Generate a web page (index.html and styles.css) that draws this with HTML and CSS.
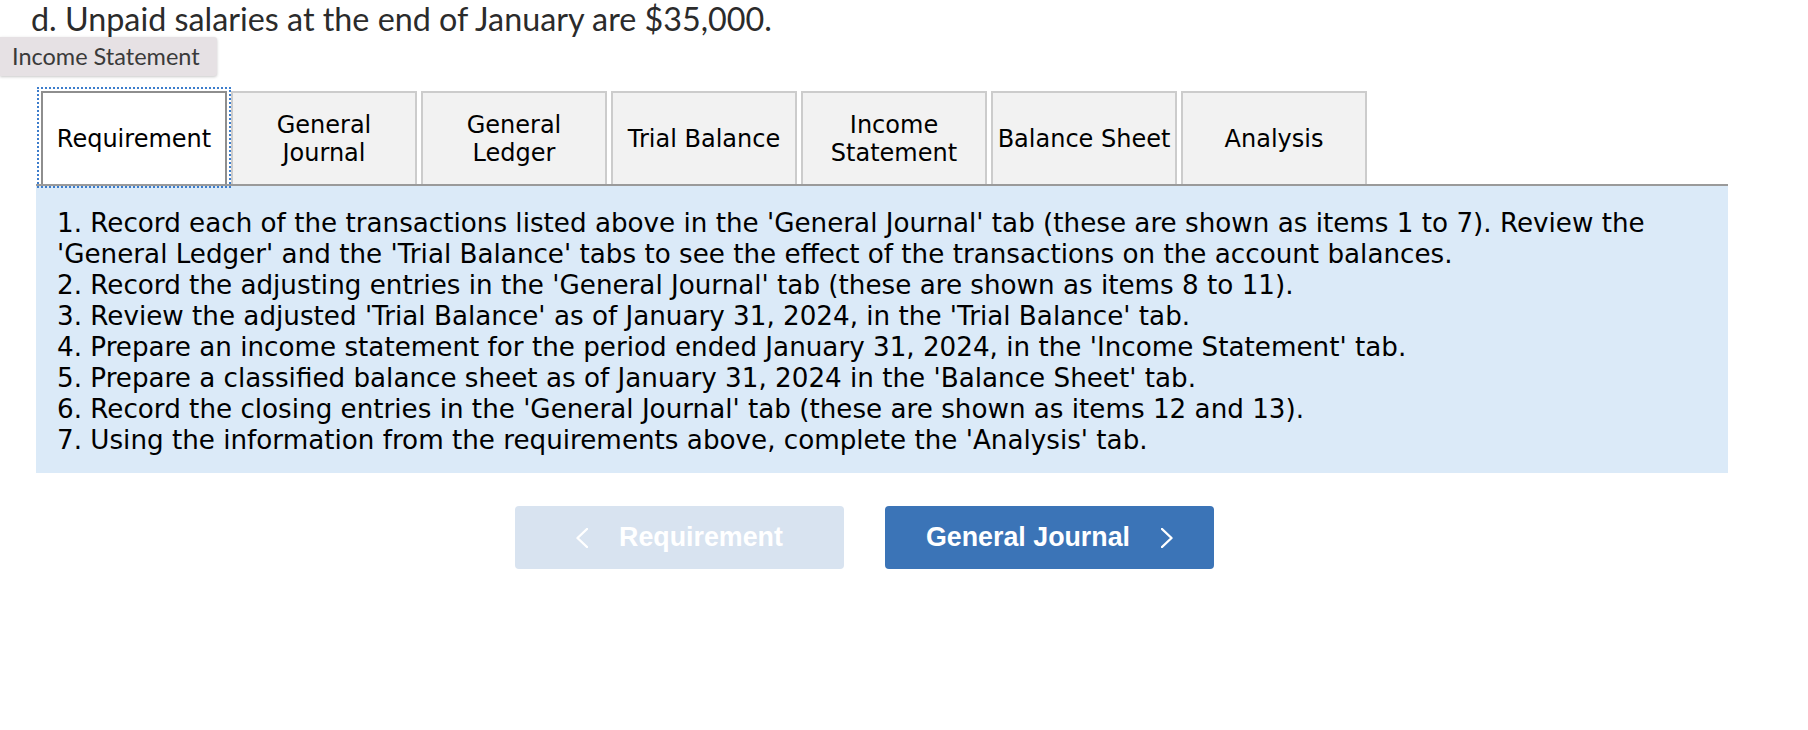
FILE: index.html
```html
<!DOCTYPE html>
<html lang="en">
<head>
<meta charset="utf-8">
<title>Requirement</title>
<link rel="stylesheet" href="styles.css">
</head>
<body>
<div class="page">
  <p class="question">d. Unpaid salaries at the end of January are $35,000.</p>
  <div class="tooltip">Income Statement</div>
  <div class="widget">
    <div class="tabs">
      <button class="tab active">Requirement</button>
      <button class="tab">General<br>Journal</button>
      <button class="tab">General<br>Ledger</button>
      <button class="tab">Trial Balance</button>
      <button class="tab">Income<br>Statement</button>
      <button class="tab">Balance Sheet</button>
      <button class="tab">Analysis</button>
    </div>
    <div class="panel">
      <p class="item">1. Record each of the transactions listed above in the 'General Journal' tab (these are shown as items 1 to 7). Review the 'General Ledger' and the 'Trial Balance' tabs to see the effect of the transactions on the account balances.</p>
      <p class="item">2. Record the adjusting entries in the 'General Journal' tab (these are shown as items 8 to 11).</p>
      <p class="item">3. Review the adjusted 'Trial Balance' as of January 31, 2024, in the 'Trial Balance' tab.</p>
      <p class="item">4. Prepare an income statement for the period ended January 31, 2024, in the 'Income Statement' tab.</p>
      <p class="item">5. Prepare a classified balance sheet as of January 31, 2024 in the 'Balance Sheet' tab.</p>
      <p class="item">6. Record the closing entries in the 'General Journal' tab (these are shown as items 12 and 13).</p>
      <p class="item">7. Using the information from the requirements above, complete the 'Analysis' tab.</p>
    </div>
    <div class="nav">
      <button class="navbtn disabled">
        <svg class="chev" width="12" height="20" viewBox="0 0 12 20"><polyline points="11,1 1.5,10 11,19"/></svg>
        <span>Requirement</span>
      </button>
      <button class="navbtn primary">
        <span>General Journal</span>
        <svg class="chev" width="12" height="20" viewBox="0 0 12 20"><polyline points="1,1 10.5,10 1,19"/></svg>
      </button>
    </div>
  </div>
</div>
</body>
</html>
```
FILE: styles.css
```css
html, body {
  margin: 0;
  padding: 0;
  background: #ffffff;
}

.page {
  position: relative;
  width: 1808px;
  min-height: 730px;
}

.question {
  margin: 0;
  padding-left: 31px;
  font-family: Lato, "Open Sans", sans-serif;
  font-size: 32.3px;
  line-height: 38px;
  color: #2b2b2b;
}

.tooltip {
  position: absolute;
  left: 0;
  top: 37px;
  width: 205px;
  height: 39px;
  padding-left: 12px;
  background: #e6e1e4;
  color: #3a3a3a;
  font-family: Lato, "Open Sans", sans-serif;
  font-size: 23.5px;
  line-height: 39px;
  border-radius: 0 3px 3px 0;
  box-shadow: 0 1px 3px rgba(0, 0, 0, 0.22);
  z-index: 5;
}

.widget {
  margin: 53px 0 0 36px;
  width: 1692px;
}

.tabs {
  display: flex;
  gap: 4px;
  padding-left: 5px;
}

.tab {
  box-sizing: border-box;
  width: 186px;
  height: 93px;
  padding: 0;
  margin: 0;
  border: 2px solid #cccccc;
  border-bottom: none;
  background: #f2f2f2;
  color: #000000;
  font-family: "DejaVu Sans", Verdana, sans-serif;
  font-size: 24px;
  line-height: 28px;
  text-align: center;
  white-space: nowrap;
  display: flex;
  align-items: center;
  justify-content: center;
}

.tab.active {
  background: #ffffff;
  border-color: #8e8e8e;
  outline: 2px dotted #3d7dcc;
  outline-offset: 2px;
}

.panel {
  border-top: 2px solid #9a9a9a;
  background: #dbeaf8;
  padding: 22px 21px 17px 21px;
  font-family: "DejaVu Sans", Verdana, sans-serif;
  font-size: 26.2px;
  line-height: 31px;
  color: #000000;
}

.item {
  margin: 0;
}

.nav {
  display: flex;
  gap: 41px;
  margin-top: 33px;
  padding-left: 479px;
}

.navbtn {
  box-sizing: border-box;
  width: 329px;
  height: 63px;
  border: none;
  border-radius: 4px;
  padding: 0;
  display: flex;
  align-items: center;
  justify-content: center;
  gap: 31px;
  font-family: "Liberation Sans", Arial, sans-serif;
  font-weight: bold;
  font-size: 26.8px;
  color: #ffffff;
}

.navbtn.disabled {
  background: #d8e3f0;
}

.navbtn.primary {
  background: #3b74b7;
}

.chev {
  display: block;
  fill: none;
  stroke: #ffffff;
  stroke-width: 2.4;
  stroke-linecap: round;
  stroke-linejoin: round;
}
```
